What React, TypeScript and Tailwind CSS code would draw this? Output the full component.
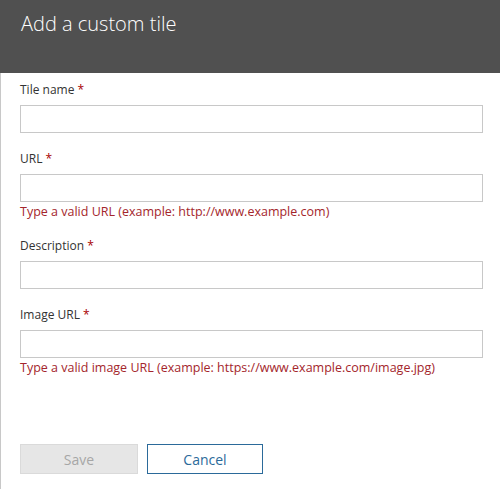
import React from "react"

const Field: React.FC<{ label: string; error?: string }> = ({ label, error }) => {
  return (
    <div className="flex flex-col">
      <label className="text-[12px] leading-[16px] text-[#333333]">
        {label} <span className="text-[#a80000]">*</span>
      </label>
      <input
        type="text"
        className="mt-[7px] h-[28px] w-[463px] border border-[#c8c8c8] bg-white outline-none"
      />
      {error && <p className="mt-[1px] text-[12.5px] leading-[18px] text-[#a4262c]">{error}</p>}
    </div>
  )
}

const App: React.FC = () => {
  return (
    <div
      className="flex min-h-[489px] w-[500px] flex-col bg-white"
      style={{ fontFamily: '"Open Sans", "Noto Sans", sans-serif' }}
    >
      <header className="h-[73px] bg-[#505050] px-[21px] pt-[10px]">
        <h1 className="text-[20px] font-light leading-[28px] text-white">Add a custom tile</h1>
      </header>
      <div className="flex flex-1 flex-col border-l border-[#c8c8c8] pl-[19px]">
        <div className="mt-[9px]">
          <Field label="Tile name" />
        </div>
        <div className="mt-[18px]">
          <Field label="URL" error="Type a valid URL (example: http://www.example.com)" />
        </div>
        <div className="mt-[17px]">
          <Field label="Description" />
        </div>
        <div className="mt-[18px]">
          <Field label="Image URL" error="Type a valid image URL (example: https://www.example.com/image.jpg)" />
        </div>
        <div className="mt-[67px] flex gap-[9px]">
          <button className="h-[30px] w-[118px] border border-[#dadada] bg-[#e6e6e6] text-[14px] text-[#a6a6a6]">
            Save
          </button>
          <button className="h-[30px] w-[116px] border border-[#2b6a9a] bg-white text-[14px] text-[#2b6a9a]">
            Cancel
          </button>
        </div>
      </div>
    </div>
  )
}

export default App
